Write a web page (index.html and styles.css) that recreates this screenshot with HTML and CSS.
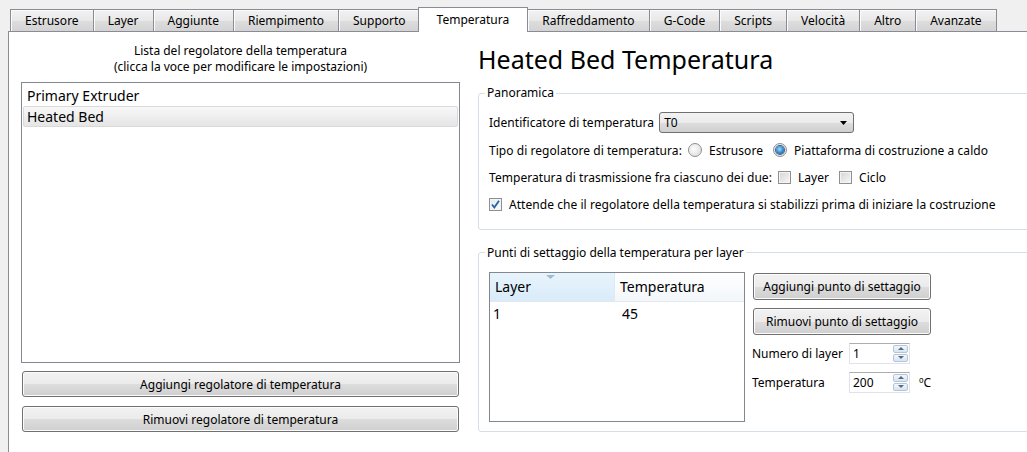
FILE: index.html
```html
<!DOCTYPE html>
<html>
<head>
<meta charset="utf-8">
<link rel="stylesheet" href="styles.css">
</head>
<body>
<div class="tabs">
  <div class="tab">Estrusore</div>
  <div class="tab">Layer</div>
  <div class="tab">Aggiunte</div>
  <div class="tab">Riempimento</div>
  <div class="tab">Supporto</div>
  <div class="tab active">Temperatura</div>
  <div class="tab">Raffreddamento</div>
  <div class="tab">G-Code</div>
  <div class="tab">Scripts</div>
  <div class="tab">Velocità</div>
  <div class="tab">Altro</div>
  <div class="tab">Avanzate</div>
</div>
<div class="pane">
  <div class="left">
    <div class="list-title">Lista del regolatore della temperatura<br>(clicca la voce per modificare le impostazioni)</div>
    <div class="listbox">
      <div class="item">Primary Extruder</div>
      <div class="item selected">Heated Bed</div>
    </div>
    <button class="btn wide">Aggiungi regolatore di temperatura</button>
    <button class="btn wide">Rimuovi regolatore di temperatura</button>
  </div>
  <div class="right">
    <h1 class="heading">Heated Bed Temperatura</h1>
    <fieldset class="group overview">
      <legend>Panoramica</legend>
      <div class="row">
        <span>Identificatore di temperatura</span>
        <div class="combo"><span>T0</span><svg class="combo-arrow" width="7" height="4" viewBox="0 0 7 4"><path d="M0 0H7L3.5 4Z" fill="#000"/></svg></div>
      </div>
      <div class="row">
        <span class="lbl">Tipo di regolatore di temperatura:</span>
        <span class="radio"></span><span class="opt">Estrusore</span>
        <span class="radio on"></span><span>Piattaforma di costruzione a caldo</span>
      </div>
      <div class="row">
        <span class="lbl">Temperatura di trasmissione fra ciascuno dei due:</span>
        <span class="check"></span><span class="opt">Layer</span>
        <span class="check"></span><span>Ciclo</span>
      </div>
      <div class="row">
        <span class="check on"><svg width="11" height="11" viewBox="0 0 11 11"><path d="M2 5.5L4.3 8.5L9 1.8" fill="none" stroke="#2a5fa0" stroke-width="1.8"/></svg></span>
        <span>Attende che il regolatore della temperatura si stabilizzi prima di iniziare la costruzione</span>
      </div>
    </fieldset>
    <fieldset class="group setpoints">
      <legend>Punti di settaggio della temperatura per layer</legend>
      <div class="sp-body">
        <div class="table">
          <div class="thead">
            <div class="th sorted">Layer<svg class="sort" width="9" height="4" viewBox="0 0 9 4"><path d="M0 0H9L4.5 4Z" fill="#9dbcd4"/></svg></div>
            <div class="th">Temperatura</div>
          </div>
          <div class="tr">
            <div class="td">1</div>
            <div class="td">45</div>
          </div>
        </div>
        <div class="sp-side">
          <button class="btn small">Aggiungi punto di settaggio</button>
          <button class="btn small">Rimuovi punto di settaggio</button>
          <div class="field">
            <span class="flabel">Numero di layer</span>
            <div class="spin"><span>1</span><span class="spin-btns"><span class="sb up"></span><span class="sb down"></span></span></div>
          </div>
          <div class="field">
            <span class="flabel">Temperatura</span>
            <div class="spin"><span>200</span><span class="spin-btns"><span class="sb up"></span><span class="sb down"></span></span></div>
            <span class="unit">ºC</span>
          </div>
        </div>
      </div>
    </fieldset>
  </div>
</div>
</body>
</html>
```
FILE: styles.css
```css
html, body {
  margin: 0;
  padding: 0;
  overflow: hidden;
}
body {
  width: 1027px;
  height: 452px;
  background: #f0f0f0;
  font-family: "Noto Sans", "Open Sans", sans-serif;
  font-size: 12px;
  color: #000;
}

/* tabs */
.tabs {
  display: flex;
  align-items: flex-end;
  margin-left: 8px;
  padding-left: 2px;
  padding-top: 7px;
  height: 24px;
  border-bottom: 1px solid #898c95;
}
.tab {
  box-sizing: border-box;
  height: 22px;
  padding: 0 14px;
  margin-right: -1px;
  border: 1px solid #898c95;
  border-bottom: none;
  background: linear-gradient(#f2f2f2, #e8e8e8 50%, #dddddd 52%, #d3d3d3);
  box-shadow: inset 1px 1px 0 #fbfbfb;
  display: flex;
  align-items: center;
  white-space: nowrap;
}
.tab.active {
  height: 25px;
  margin: 0 -1px -1px -2px;
  padding: 0 18px 2px;
  background: #ffffff;
  box-shadow: none;
  position: relative;
}

/* pane */
.pane {
  box-sizing: border-box;
  height: 421px;
  margin-left: 8px;
  border-left: 1px solid #898c95;
  background: #ffffff;
  display: flex;
  gap: 18px;
  padding: 11px 0 0 12px;
}
.left {
  width: 439px;
  flex: none;
  display: flex;
  flex-direction: column;
}
.list-title {
  text-align: center;
  line-height: 16px;
  margin-bottom: 7px;
}
.listbox {
  box-sizing: border-box;
  height: 281px;
  border: 1px solid #828790;
  padding: 2px 1px 0;
  background: #fff;
}
.item {
  box-sizing: border-box;
  height: 21px;
  padding-left: 3px;
  font-size: 14px;
  line-height: 20px;
  border: 1px solid transparent;
}
.item.selected {
  border-color: #d9d9d9;
  border-radius: 2px;
  background: linear-gradient(#f8f8f8, #e5e5e5);
}

.btn {
  box-sizing: border-box;
  font: inherit;
  color: #000;
  border: 1px solid #707070;
  border-radius: 3px;
  background: linear-gradient(#f2f2f2, #ebebeb 50%, #dddddd 51%, #cfcfcf);
  box-shadow: inset 0 0 0 1px #fcfcfc;
  padding: 0;
  height: 26px;
}
.btn.wide {
  width: 437px;
  margin: 8px 1px 0;
}
.btn.wide + .btn.wide {
  margin-top: 9px;
}

/* right */
.right {
  width: 600px;
  flex: none;
}
.heading {
  margin: 0 0 10px;
  font-size: 25px;
  font-weight: normal;
  line-height: 32px;
  height: 32px;
}
.group {
  box-sizing: border-box;
  margin: 0;
  border: 1px solid #d5dfe5;
  border-radius: 3px;
  padding: 0 0 10px 10px;
}
.group legend {
  padding: 0 2px;
  margin-left: -4px;
  line-height: 16px;
}
.overview {
  padding-top: 8px;
}
.row {
  height: 27.4px;
  display: flex;
  align-items: center;
  white-space: nowrap;
  letter-spacing: 0.05px;
}
.lbl {
  margin-right: 6px;
}
.opt {
  margin-right: 10px;
}
.combo {
  box-sizing: border-box;
  width: 195px;
  height: 21px;
  margin-left: 5px;
  border: 1px solid #707070;
  border-radius: 3px;
  background: linear-gradient(#f2f2f2, #ebebeb 50%, #dddddd 51%, #cfcfcf);
  display: flex;
  align-items: center;
  justify-content: space-between;
  padding: 0 6px 0 4px;
}
.radio {
  box-sizing: border-box;
  width: 14px;
  height: 14px;
  border-radius: 50%;
  border: 1px solid #8c8f94;
  background: radial-gradient(circle at 40% 40%, #fdfdfd, #d8d8d8);
  margin-right: 7px;
  display: flex;
  align-items: center;
  justify-content: center;
}
.radio.on::after {
  content: "";
  width: 8px;
  height: 8px;
  border-radius: 50%;
  background: radial-gradient(circle at 45% 40%, #a9dcf7, #2b7fc2 60%, #1b4f80);
  box-shadow: 0 0 0 1px #34628f;
}
.check {
  box-sizing: border-box;
  width: 13px;
  height: 13px;
  border: 1px solid #8e8f8f;
  background: linear-gradient(135deg, #d5d5d5, #f7f7f7);
  box-shadow: inset 0 0 0 1px #f4f4f4;
  margin-right: 7px;
  display: flex;
  align-items: center;
  justify-content: center;
}
.check.on {
  background: linear-gradient(135deg, #dfe9f3, #fafcfe);
}
.check svg {
  display: block;
}

.setpoints {
  margin-top: 15px;
  padding-top: 11px;
  padding-bottom: 9px;
}
.sp-body {
  display: flex;
  gap: 8px;
}
.table {
  box-sizing: border-box;
  width: 256px;
  height: 150px;
  border: 1px solid #828790;
  background: #fff;
}
.thead {
  display: flex;
  height: 28px;
  border-bottom: 1px solid #e3e8ee;
}
.th {
  box-sizing: border-box;
  display: flex;
  align-items: center;
  padding-left: 5px;
  font-size: 14px;
  position: relative;
  background: linear-gradient(#ffffff, #f3f7fb);
  flex: 1;
}
.th.sorted {
  width: 125px;
  flex: none;
  border-right: 1px solid #e3e8ee;
  background: linear-gradient(#e8f4fc, #d9ebf9);
}
.sort {
  position: absolute;
  top: 2px;
  left: 56px;
}
.tr {
  display: flex;
  height: 24px;
  align-items: center;
  font-size: 14px;
}
.td {
  padding-left: 3px;
}
.td:first-child {
  width: 125px;
}
.td + .td {
  padding-left: 4px;
}
.sp-side {
  padding-top: 1px;
  display: flex;
  flex-direction: column;
  align-items: flex-start;
}
.btn.small {
  width: 178px;
  height: 27px;
  margin-bottom: 8px;
}
.field {
  display: flex;
  align-items: center;
  height: 21px;
  margin-bottom: 8px;
  margin-left: -1px;
}
.flabel {
  width: 97px;
}
.spin {
  box-sizing: border-box;
  width: 61px;
  height: 21px;
  border: 1px solid #e2e3ea;
  border-top-color: #abadb3;
  display: flex;
  align-items: center;
  justify-content: space-between;
  padding: 0 1px 0 3px;
}
.spin-btns {
  display: flex;
  flex-direction: column;
  gap: 1px;
}
.sb {
  box-sizing: border-box;
  width: 15px;
  height: 8px;
  border: 1px solid #b5c5d6;
  border-radius: 2px;
  background: linear-gradient(#f3f7fb, #d7e4f1);
  display: flex;
  align-items: center;
  justify-content: center;
}
.sb::after {
  content: "";
  border-left: 3px solid transparent;
  border-right: 3px solid transparent;
}
.sb.up::after {
  border-bottom: 3px solid #52698a;
}
.sb.down::after {
  border-top: 3px solid #52698a;
}
.unit {
  margin-left: 9px;
}
```
